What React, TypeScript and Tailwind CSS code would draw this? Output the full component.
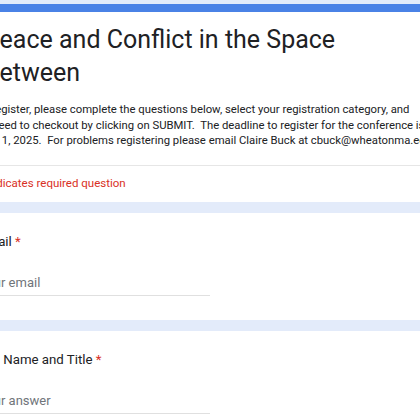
import React from "react";

const sans = { fontFamily: "Roboto, 'Liberation Sans', sans-serif" };

function QuestionCard({ label, placeholder }: { label: string; placeholder: string }) {
  return (
    <div className="bg-white rounded-lg h-[107px] pl-[25px] pt-[6px]">
      <div className="text-[13.25px] leading-[46px] text-[#202124] whitespace-nowrap">
        {label} <span className="text-[#d93025]">*</span>
      </div>
      <div className="w-[231px] mt-[7px] border-b border-[#e0e0e0] text-[13px] leading-[22px] pb-[1px] text-[#70757a]">
        {placeholder}
      </div>
    </div>
  );
}

export default function App() {
  return (
    <div className="w-[420px] h-[420px] overflow-hidden bg-[#e3ebfa]" style={sans}>
      <div className="ml-[-46px] w-[560px] pt-[4px] flex flex-col gap-[11px]">
        {/* Title card */}
        <div className="bg-white rounded-lg border-t-[8px] border-[#4a82e6] h-[198px] flex flex-col">
          <div className="pl-[30px] pt-[11px] text-[25px] leading-[33px] text-[#202124]">
            <div className="whitespace-nowrap">Peace and Conflict in the Space</div>
            <div>Between</div>
          </div>
          <div className="pl-[22px] pt-[13px] text-[11.3px] leading-[15.7px] text-[#202124] whitespace-nowrap">
            <div>To register, please complete the questions below, select your registration category, and</div>
            <div>proceed to checkout by clicking on SUBMIT.&nbsp; The deadline to register for the conference is</div>
            <div>April 1, 2025.&nbsp; For problems registering please email Claire Buck at cbuck@wheatonma.edu</div>
          </div>
          <div className="mt-[16px] border-t border-[#e6e6e6]" />
          <div className="pl-[25px] pt-[9px] text-[11.5px] leading-[16px] text-[#d93025]">
            * Indicates required question
          </div>
        </div>

        <QuestionCard label="Email" placeholder="Your email" />
        <QuestionCard label="Full Name and Title" placeholder="Your answer" />
      </div>
    </div>
  );
}
